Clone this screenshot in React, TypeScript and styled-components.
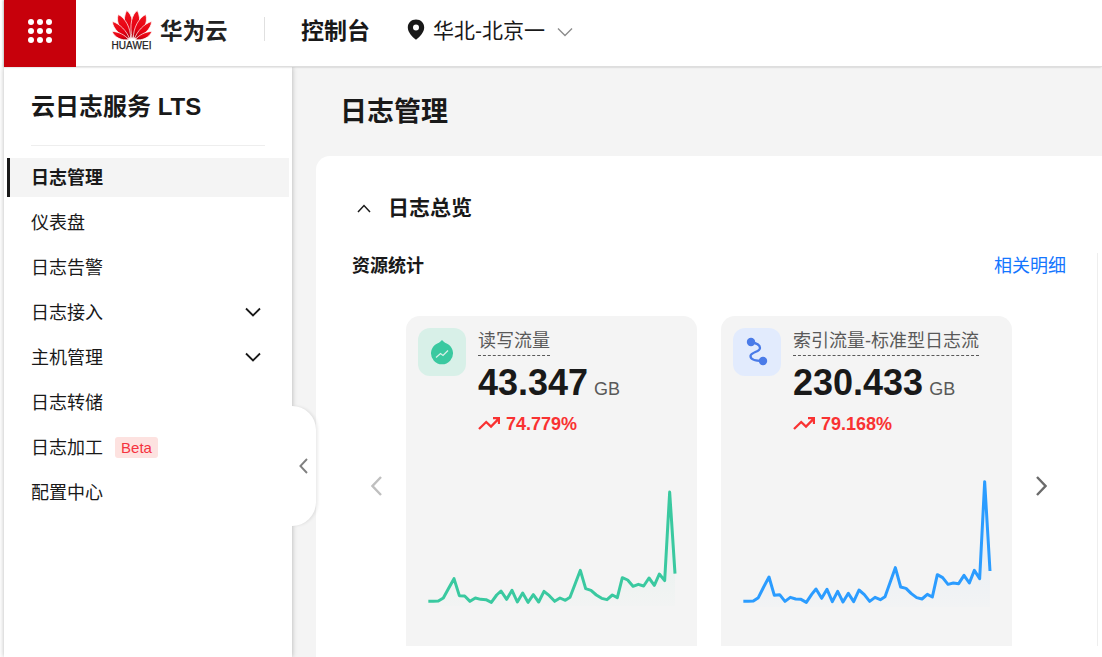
import React from "react";
import styled, { createGlobalStyle } from "styled-components";

const GlobalStyle = createGlobalStyle`
  html, body { margin: 0; padding: 0; background: #fff; }
  body { font-family: "Liberation Sans", "Noto Sans CJK SC", sans-serif; color: #191919; }
  * { box-sizing: border-box; }
`;

const Shell = styled.div`
  width: 1102px;
  height: 657px;
  overflow: hidden;
  display: flex;
  flex-direction: column;
  padding-left: 4px;
  background: #fff;
`;

const TopBar = styled.header`
  height: 67px;
  flex: none;
  display: flex;
  align-items: center;
  padding-bottom: 8px;
  border-bottom: 1px solid #dedede;
  box-shadow: -1px 0 2px rgba(0, 0, 0, 0.25);
  position: relative;
  z-index: 3;
  background: #fff;
`;

const RedBlock = styled.div`
  width: 72px;
  height: 67px;
  flex: none;
  align-self: flex-start;
  background: #c7000b;
  display: flex;
  align-items: center;
  justify-content: center;
`;

const DotGrid = styled.div`
  display: grid;
  grid-template-columns: repeat(3, 6px);
  gap: 3px;
  margin-top: -5px;
`;

const Dot = styled.span`
  width: 6px;
  height: 6px;
  border-radius: 50%;
  background: #fff;
`;

const LogoBlock = styled.div`
  margin-left: 35px;
  width: 41px;
  display: flex;
  flex-direction: column;
  align-items: center;
  padding-top: 2px;
`;

const LogoText = styled.span`
  font-size: 10px;
  line-height: 10px;
  font-weight: 400;
  color: #222;
  letter-spacing: 0.1px;
  margin-top: 1px;
  white-space: nowrap;
  -webkit-text-stroke: 0.25px #222;
`;

const Brand = styled.span`
  margin-left: 8px;
  font-size: 22.5px;
  font-weight: 700;
  color: #222;
`;

const BarDivider = styled.span`
  width: 1px;
  height: 24px;
  background: #e0e0e0;
  margin-left: 36.5px;
`;

const ConsoleName = styled.span`
  margin-left: 36px;
  font-size: 23px;
  font-weight: 700;
  color: #191919;
`;

const Region = styled.div`
  margin-left: 37px;
  display: flex;
  align-items: center;
  font-size: 21px;
  color: #191919;
`;

const RegionLabel = styled.span`
  margin-left: 8px;
`;

const RegionCaret = styled.svg`
  margin-left: 12px;
  margin-top: 5px;
`;

const Body = styled.div`
  flex: 1;
  min-height: 0;
  display: flex;
`;

const Sidebar = styled.aside`
  width: 288px;
  flex: none;
  position: relative;
  z-index: 2;
  background: #fff;
  box-shadow: 0 0 5px rgba(0, 0, 0, 0.28);
  display: flex;
  flex-direction: column;
`;

const SideTitle = styled.div`
  margin: 0 27px;
  height: 79px;
  flex: none;
  border-bottom: 1px solid #eeeeee;
  font-size: 24px;
  font-weight: 700;
  display: flex;
  align-items: center;
  padding-bottom: 4px;
  white-space: nowrap;
  color: #191919;
`;

const Menu = styled.nav`
  margin-top: 12px;
  padding: 0 3px;
  display: flex;
  flex-direction: column;
  gap: 6px;
`;

const MenuItem = styled.div<{ $active?: boolean }>`
  height: 39px;
  display: flex;
  align-items: center;
  padding: 0 28px 4px 21px;
  font-size: 18px;
  font-weight: ${(p) => (p.$active ? 700 : 400)};
  background: ${(p) => (p.$active ? "#f4f4f4" : "transparent")};
  border-left: 3px solid ${(p) => (p.$active ? "#191919" : "transparent")};
  color: #191919;
`;

const MenuCaret = styled.svg`
  margin-left: auto;
  margin-top: 2px;
`;

const Beta = styled.span`
  margin: 4px 0 0 12px;
  width: 43px;
  height: 21px;
  border-radius: 3px;
  background: #fde2e0;
  color: #f5333f;
  font-size: 15px;
  font-weight: 400;
  display: flex;
  align-items: center;
  justify-content: center;
`;

const CollapseTab = styled.div`
  position: absolute;
  left: 100%;
  top: 339px;
  width: 24px;
  height: 120px;
  background: #fff;
  border-radius: 0 24px 24px 0;
  box-shadow: 2px 0 3px rgba(0, 0, 0, 0.08);
  display: flex;
  align-items: center;
  justify-content: flex-end;
  padding: 0 8px 0 0;
`;

const Main = styled.main`
  flex: 1;
  min-width: 0;
  background: #f4f4f4;
  padding-left: 24px;
  display: flex;
  flex-direction: column;
`;

const PageTitle = styled.h1`
  margin: 0;
  height: 89px;
  flex: none;
  padding: 0 0 4px 24px;
  display: flex;
  align-items: center;
  font-size: 27px;
  font-weight: 700;
  color: #191919;
`;

const Panel = styled.section`
  flex: 1;
  background: #fff;
  border-radius: 14px 0 0 0;
  padding: 38px 4px 0 0;
`;

const SectionHead = styled.div`
  height: 28px;
  display: flex;
  align-items: center;
  padding-left: 41px;
  gap: 17px;
`;

const SectionTitle = styled.h2`
  margin: 0 0 4px;
  font-size: 21px;
  font-weight: 700;
  color: #191919;
`;

const Overview = styled.div`
  margin-top: 31px;
  border-right: 1px solid #eeeeee;
  height: 393px;
`;

const StatHead = styled.div`
  height: 26px;
  display: flex;
  align-items: center;
  justify-content: space-between;
  padding: 0 31px 4px 36px;
`;

const StatTitle = styled.h3`
  margin: 0;
  font-size: 18px;
  font-weight: 700;
  color: #191919;
`;

const DetailLink = styled.a`
  font-size: 18px;
  color: #1476ff;
  text-decoration: none;
`;

const Carousel = styled.div`
  margin-top: 37px;
  padding-left: 55px;
  display: flex;
  align-items: center;
  gap: 24px;
`;

const ArrowIcon = styled.svg`
  flex: none;
  margin-top: 9px;
`;

const Card = styled.article`
  width: 291px;
  height: 330px;
  flex: none;
  border-radius: 14px 14px 0 0;
  background: #f4f4f4;
  padding: 12px 0 0 12px;
  display: flex;
  flex-direction: column;
  overflow: hidden;
`;

const CardHead = styled.div`
  display: flex;
  gap: 12px;
  height: 130px;
  flex: none;
`;

const IconTile = styled.div<{ $bg: string }>`
  width: 48px;
  height: 48px;
  flex: none;
  border-radius: 12px;
  background: ${(p) => p.$bg};
  display: flex;
  align-items: center;
  justify-content: center;
`;

const CardBody = styled.div`
  display: flex;
  flex-direction: column;
  align-items: flex-start;
`;

const CardLabel = styled.span`
  font-size: 18px;
  line-height: 26px;
  height: 28px;
  color: #595959;
  border-bottom: 1px dashed #595959;
  white-space: nowrap;
`;

const ValueRow = styled.div`
  margin-top: 5px;
  display: flex;
  align-items: baseline;
  gap: 6px;
  height: 44px;
  line-height: 44px;
`;

const Value = styled.span`
  font-size: 36px;
  font-weight: 700;
  color: #191919;
`;

const Unit = styled.span`
  font-size: 18px;
  color: #595959;
`;

const Trend = styled.div`
  margin-top: 6px;
  display: flex;
  align-items: center;
  gap: 6px;
  font-size: 18px;
  font-weight: 700;
  color: #f93232;
  height: 26px;
`;

const ChartSvg = styled.svg`
  display: block;
  margin: auto 0 -1px -12px;
  flex: none;
`;

const XS = [85,100,115,130,146,162,178,194,210,226,242,258,274,290,303,320,336,352,368,384,400,416,432,448,464,480,496,510,525,541,557,573,589,605,621,637,652,667,683,699,715,731,747,763,778,794,809,825];
const GREEN = [391,391,390,381,352,323,374,375,391,381,385,386,394,372,360,385,358,393,366,394,371,393,361,374,391,381,388,379,340,298,353,358,372,382,386,372,380,320,327,346,340,345,321,343,309,329,63,308];
const BLUE = [391,391,390,380,348,318,373,371,391,379,384,385,394,370,354,382,355,392,361,393,367,392,357,371,391,379,386,377,335,290,348,352,368,380,384,370,378,311,320,340,336,338,313,336,298,323,32,300];

function Sparkline({ id, data, color, base }: { id: string; data: number[]; color: string; base: number }) {
  const line = data.map((y, i) => `${XS[i]},${y}`).join(" ");
  const area = `${XS[0]},${base} ${line} ${XS[XS.length - 1]},${base}`;
  return (
    <ChartSvg width={291} height={176} viewBox="18 0 873 528">
      <defs>
        <linearGradient id={id} x1="0" y1="0" x2="0" y2="1">
          <stop offset="0" stopColor={color} stopOpacity="0.1" />
          <stop offset="1" stopColor={color} stopOpacity="0.01" />
        </linearGradient>
      </defs>
      <polygon points={area} fill={`url(#${id})`} />
      <polyline points={line} fill="none" stroke={color} strokeWidth="9" strokeLinejoin="round" />
    </ChartSvg>
  );
}

function Petals() {
  const half = (
    <>
      <path d="M19.700 28.500C12 20 10.500 9 14.600 .6 20 4 23 15 19.700 28.500Z" />
      <path d="M18.600 28.800C9 22 3.500 13 6.200 4.500 13 7.500 19 18 18.600 28.800Z" />
      <path d="M17.600 29C9 26 .8 19 .4 11.500 7.500 13.500 15 21 17.600 29Z" />
      <path d="M16.800 29.600C9.500 30.800 2.800 27.500 0 21.500 7 21.500 13 25.200 16.800 29.600Z" />
    </>
  );
  return (
    <svg width="40" height="30" viewBox="0 0 40 30">
      <defs>
        <linearGradient id="petal" x1="0" y1="0" x2="0" y2="1">
          <stop offset="0" stopColor="#f0141e" />
          <stop offset="0.6" stopColor="#e60012" />
          <stop offset="1" stopColor="#a8000c" />
        </linearGradient>
      </defs>
      <g fill="url(#petal)" stroke="#fff" strokeWidth="0.7">
        {half}
        <g transform="translate(40 0) scale(-1 1)">{half}</g>
      </g>
    </svg>
  );
}

function Caret() {
  return (
    <MenuCaret width="16" height="10" viewBox="0 0 16 10">
      <path d="M1 1.500L8 8.500L15 1.500" fill="none" stroke="#191919" strokeWidth="1.800" />
    </MenuCaret>
  );
}

function TrendIcon() {
  return (
    <svg width="22" height="14" viewBox="0 0 22 14">
      <path d="M1 12L8.200 5L13 9.600L20.800 1.600M15 1.200H21V7" fill="none" stroke="#f93232" strokeWidth="2.300" />
    </svg>
  );
}

function StatCard(props: {
  tile: string;
  icon: React.ReactNode;
  label: string;
  value: string;
  pct: string;
  id: string;
  data: number[];
  color: string;
  base: number;
}) {
  return (
    <Card>
      <CardHead>
        <IconTile $bg={props.tile}>{props.icon}</IconTile>
        <CardBody>
          <CardLabel>{props.label}</CardLabel>
          <ValueRow>
            <Value>{props.value}</Value>
            <Unit>GB</Unit>
          </ValueRow>
          <Trend>
            <TrendIcon />
            {props.pct}
          </Trend>
        </CardBody>
      </CardHead>
      <Sparkline id={props.id} data={props.data} color={props.color} base={props.base} />
    </Card>
  );
}

const MENU = ["仪表盘", "日志告警"];

export default function App() {
  return (
    <>
      <GlobalStyle />
      <Shell>
        <TopBar>
          <RedBlock>
            <DotGrid>
              {Array.from({ length: 9 }, (_, i) => (
                <Dot key={i} />
              ))}
            </DotGrid>
          </RedBlock>
          <LogoBlock>
            <Petals />
            <LogoText>HUAWEI</LogoText>
          </LogoBlock>
          <Brand>华为云</Brand>
          <BarDivider />
          <ConsoleName>控制台</ConsoleName>
          <Region>
            <svg width="18" height="21" viewBox="0 0 18 21">
              <path
                fillRule="evenodd"
                d="M9 0.500C4.200 0.500 0.800 4 0.800 8.400 0.800 13 5 17.400 9 20.800 13 17.400 17.200 13 17.200 8.400 17.200 4 13.800 .5 9 .5ZM9 5.400A3 3 0 1 1 9 11.400 3 3 0 0 1 9 5.400Z"
                fill="#191919"
              />
            </svg>
            <RegionLabel>华北-北京一</RegionLabel>
            <RegionCaret width="16" height="10" viewBox="0 0 16 10">
              <path d="M1 1.500L8 8.500L15 1.500" fill="none" stroke="#8c8c8c" strokeWidth="1.400" />
            </RegionCaret>
          </Region>
        </TopBar>
        <Body>
          <Sidebar>
            <SideTitle>云日志服务 LTS</SideTitle>
            <Menu>
              <MenuItem $active>日志管理</MenuItem>
              {MENU.map((m) => (
                <MenuItem key={m}>{m}</MenuItem>
              ))}
              <MenuItem>
                日志接入
                <Caret />
              </MenuItem>
              <MenuItem>
                主机管理
                <Caret />
              </MenuItem>
              <MenuItem>日志转储</MenuItem>
              <MenuItem>
                日志加工
                <Beta>Beta</Beta>
              </MenuItem>
              <MenuItem>配置中心</MenuItem>
            </Menu>
            <CollapseTab>
              <svg width="9" height="16" viewBox="0 0 9 16">
                <path d="M8 1L1.400 8L8 15" fill="none" stroke="#808080" strokeWidth="1.900" />
              </svg>
            </CollapseTab>
          </Sidebar>
          <Main>
            <PageTitle>日志管理</PageTitle>
            <Panel>
              <SectionHead>
                <svg width="14" height="9" viewBox="0 0 14 9">
                  <path d="M1 8L7 1.500L13 8" fill="none" stroke="#191919" strokeWidth="1.500" />
                </svg>
                <SectionTitle>日志总览</SectionTitle>
              </SectionHead>
              <Overview>
                <StatHead>
                  <StatTitle>资源统计</StatTitle>
                  <DetailLink>相关明细</DetailLink>
                </StatHead>
                <Carousel>
                  <ArrowIcon width="11" height="20" viewBox="0 0 11 20">
                    <path d="M10 1L1.500 10L10 19" fill="none" stroke="#bfbfbf" strokeWidth="2.400" />
                  </ArrowIcon>
                  <StatCard
                    tile="#d8f0e8"
                    icon={
                      <svg width="24" height="26" viewBox="0 0 24 26">
                        <path d="M12 1C14 3.500 16 4 18.500 5.500A11 11 0 1 1 5.500 5.500C8 4 10 3.500 12 1Z" fill="#3ac9a0" />
                        <path d="M6 18.500L10.500 14.500L13 16.500L18 11.500" fill="none" stroke="#d8f0e8" strokeWidth="1.300" />
                      </svg>
                    }
                    label="读写流量"
                    value="43.347"
                    pct="74.779%"
                    id="areaGreen"
                    data={GREEN}
                    color="#3ac9a0"
                    base={405}
                  />
                  <StatCard
                    tile="#e2ebfd"
                    icon={
                      <svg width="24" height="30" viewBox="0 0 24 30">
                        <path d="M6 5C11 6 15 8 15 11C15 15 6 15 5.500 19C5.500 22 10 24 18 24" fill="none" stroke="#4a7be8" strokeWidth="2.300" />
                        <circle cx="6" cy="5" r="4.200" fill="#4a7be8" />
                        <circle cx="18" cy="24" r="4.200" fill="#4a7be8" />
                      </svg>
                    }
                    label="索引流量-标准型日志流"
                    value="230.433"
                    pct="79.168%"
                    id="areaBlue"
                    data={BLUE}
                    color="#2b9cff"
                    base={408}
                  />
                  <ArrowIcon width="11" height="20" viewBox="0 0 11 20">
                    <path d="M1 1L9.500 10L1 19" fill="none" stroke="#6b6b6b" strokeWidth="2.400" />
                  </ArrowIcon>
                </Carousel>
              </Overview>
            </Panel>
          </Main>
        </Body>
      </Shell>
    </>
  );
}
